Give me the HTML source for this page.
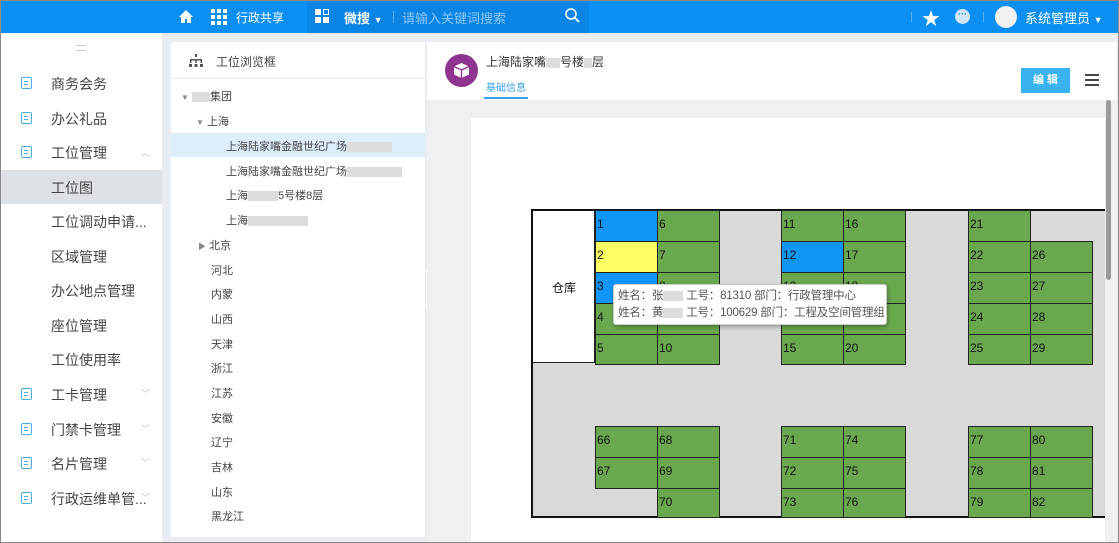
<!DOCTYPE html>
<html><head><meta charset="utf-8"><style>
*{margin:0;padding:0;box-sizing:border-box}
body{width:1119px;height:543px;overflow:hidden;font-family:"Liberation Sans","Noto Sans CJK SC",sans-serif;background:#e9edf2;position:relative;color:#333}
.a{position:absolute}
.top{left:0;top:0;width:1119px;height:33px;background:#0b8ff3;color:#fff;font-size:12px}
.side{left:1px;top:33px;width:161px;height:509px;background:#fff}
.si{position:absolute;left:50px;font-size:14px;color:#444}
.ic{position:absolute;left:20px;width:11px;height:12px;border:1.5px solid #4aaee8;border-radius:2px;background:linear-gradient(#4aaee8,#4aaee8) 2px 3px/4px 1px no-repeat,linear-gradient(#4aaee8,#4aaee8) 2px 6px/4px 1px no-repeat}
.chev{position:absolute;left:140px;font-size:9px;color:#bbb}
.tree{left:171px;top:42px;width:254px;height:495px;background:#fff}
.ti{position:absolute;font-size:11px;color:#444}
.blur{display:inline-block;background:#ddd;height:10px;vertical-align:middle}
.cell{position:absolute;width:63px;height:32px;border:1px solid #222;background:#6aa84f;font-size:12px;color:#111;padding:6px 0 0 1px;font-family:"Liberation Sans",sans-serif}
</style></head><body>
<div class="a" style="left:0;top:0;width:1119px;height:543px;border:1px solid #888;z-index:50;pointer-events:none"></div>
<div class="a top">
 <svg class="a" style="left:178px;top:9px" width="16" height="15" viewBox="0 0 16 15"><path d="M8 1L1 8h2v6h4v-4h2v4h4V8h2z" fill="#fff"/></svg>
 <svg class="a" style="left:211px;top:9px" width="16" height="16"><g fill="#fff"><rect x="0" y="0" width="4" height="4"/><rect x="6" y="0" width="4" height="4"/><rect x="12" y="0" width="4" height="4"/><rect x="0" y="6" width="4" height="4"/><rect x="6" y="6" width="4" height="4"/><rect x="12" y="6" width="4" height="4"/><rect x="0" y="12" width="4" height="4"/><rect x="6" y="12" width="4" height="4"/><rect x="12" y="12" width="4" height="4"/></g></svg>
 <div class="a" style="left:236px;top:9px;font-size:12px">行政共享</div>
 <div class="a" style="left:307px;top:0;width:282px;height:33px;background:#0a85e6"></div>
 <svg class="a" style="left:315px;top:9px" width="14" height="14"><g fill="#fff"><rect x="0" y="0" width="6" height="6"/><rect x="0" y="8" width="6" height="6"/><rect x="8" y="8" width="6" height="6"/><rect x="8.5" y="0.5" width="5" height="5" fill="none" stroke="#fff"/></g></svg>
 <div class="a" style="left:344px;top:8px;font-size:13px;font-weight:bold">微搜 <span style="font-size:9px">▼</span></div>
 <div class="a" style="left:393px;top:11px;width:1px;height:12px;background:#5aaef0"></div>
 <div class="a" style="left:402px;top:8px;font-size:13px;color:#8cc6f5">请输入关键词搜索</div>
 <svg class="a" style="left:565px;top:8px" width="15" height="15"><circle cx="6" cy="6" r="5" fill="none" stroke="#fff" stroke-width="1.6"/><path d="M10 10l4 4" stroke="#fff" stroke-width="1.8"/></svg>
 <div class="a" style="left:911px;top:12px;width:1px;height:10px;background:#5aaef0"></div>
 <div class="a" style="left:922px;top:5px;font-size:18px">★</div>
 <div class="a" style="left:955px;top:9px;width:15px;height:15px;border-radius:50%;background:#cfe6fb;color:#0b8ff3;font-size:9px;line-height:11px;text-align:center;font-weight:bold">···</div>
 <div class="a" style="left:983px;top:12px;width:1px;height:10px;background:#5aaef0"></div>
 <div class="a" style="left:995px;top:6px;width:22px;height:22px;border-radius:50%;background:#f1f1f1"></div>
 <div class="a" style="left:1025px;top:8px;font-size:13px">系统管理员 <span style="font-size:9px">▼</span></div>
</div>
<div class="a side">
 <div class="a" style="left:75px;top:12px;width:10px;height:6px;border-top:1px solid #ccc;border-bottom:1px solid #ccc"></div>
 <div class="a" style="left:0;top:137px;width:161px;height:34px;background:#dde1e6"></div>
 <div class="ic" style="top:44px"></div><div class="si" style="top:41px">商务会务</div>
 <div class="ic" style="top:79px"></div><div class="si" style="top:76px">办公礼品</div>
 <div class="ic" style="top:113px"></div><div class="si" style="top:110px">工位管理</div><div class="chev" style="top:113px">︿</div>
 <div class="si" style="top:145px">工位图</div>
 <div class="si" style="top:179px">工位调动申请...</div>
 <div class="si" style="top:214px">区域管理</div>
 <div class="si" style="top:248px">办公地点管理</div>
 <div class="si" style="top:283px">座位管理</div>
 <div class="si" style="top:317px">工位使用率</div>
 <div class="ic" style="top:355px"></div><div class="si" style="top:352px">工卡管理</div><div class="chev" style="top:354px">﹀</div>
 <div class="ic" style="top:390px"></div><div class="si" style="top:387px">门禁卡管理</div><div class="chev" style="top:389px">﹀</div>
 <div class="ic" style="top:424px"></div><div class="si" style="top:421px">名片管理</div><div class="chev" style="top:423px">﹀</div>
 <div class="ic" style="top:459px"></div><div class="si" style="top:456px">行政运维单管...</div><div class="chev" style="top:458px">﹀</div>
</div>
<div class="a tree">
 <div class="a" style="left:0;top:36px;width:254px;height:1px;background:#e8e8e8"></div>
 <svg class="a" style="left:18px;top:12px" width="14" height="14"><g fill="#555"><rect x="6" y="0" width="2" height="3"/><rect x="1" y="5" width="12" height="1.5"/><rect x="1" y="5" width="1.5" height="4"/><rect x="6.2" y="5" width="1.5" height="4"/><rect x="11.5" y="5" width="1.5" height="4"/><rect x="0" y="10" width="3" height="3"/><rect x="5.5" y="10" width="3" height="3"/><rect x="11" y="10" width="3" height="3"/></g></svg>
 <div class="a" style="left:45px;top:11px;font-size:12px;color:#444">工位浏览框</div>
 <div class="a" style="left:0;top:91px;width:254px;height:24px;background:#ddeefc"></div>
 <div class="ti" style="left:10px;top:46px"><span style="font-size:8px;color:#888">▼</span> <span class="blur" style="width:18px"></span>集团</div>
 <div class="ti" style="left:25px;top:71px"><span style="font-size:8px;color:#888">▼</span> 上海</div>
 <div class="ti" style="left:55px;top:96px">上海陆家嘴金融世纪广场<span class="blur" style="width:45px"></span></div>
 <div class="ti" style="left:55px;top:121px">上海陆家嘴金融世纪广场<span class="blur" style="width:55px"></span></div>
 <div class="ti" style="left:55px;top:145px">上海<span class="blur" style="width:30px"></span>5号楼8层</div>
 <div class="ti" style="left:55px;top:170px">上海<span class="blur" style="width:60px"></span></div>
 <div class="ti" style="left:27px;top:195px"><span style="font-size:8px;color:#888">▶</span> 北京</div>
 <div class="ti" style="left:40px;top:220px">河北</div>
 <div class="ti" style="left:40px;top:244px">内蒙</div>
 <div class="ti" style="left:40px;top:269px">山西</div>
 <div class="ti" style="left:40px;top:294px">天津</div>
 <div class="ti" style="left:40px;top:318px">浙江</div>
 <div class="ti" style="left:40px;top:343px">江苏</div>
 <div class="ti" style="left:40px;top:368px">安徽</div>
 <div class="ti" style="left:40px;top:392px">辽宁</div>
 <div class="ti" style="left:40px;top:417px">吉林</div>
 <div class="ti" style="left:40px;top:442px">山东</div>
 <div class="ti" style="left:40px;top:466px">黑龙江</div>
</div>
<div class="a" style="left:426px;top:270px;width:10px;height:38px;background:#fff;border-radius:0 6px 6px 0;font-size:7px;color:#888;line-height:38px;text-align:center">◀</div>
<div class="a" style="left:427px;top:42px;width:690px;height:58px;background:#fff">
 <div class="a" style="left:18px;top:12px;width:33px;height:33px;border-radius:50%;background:#8f3591"></div>
 <svg class="a" style="left:26px;top:20px" width="17" height="17" viewBox="0 0 17 17"><path d="M8.5 1L16 4.5v8L8.5 16 1 12.5v-8z" fill="#fff"/><path d="M1 4.5l7.5 3.5L16 4.5M8.5 8v8" stroke="#8f3591" stroke-width="1.4" fill="none"/></svg>
 <div class="a" style="left:59px;top:11px;font-size:12px;color:#333">上海陆家嘴<span class="blur" style="width:14px"></span>号楼<span class="blur" style="width:8px"></span>层</div>
 <div class="a" style="left:59px;top:37px;font-size:10px;color:#3aa0e8">基础信息</div>
 <div class="a" style="left:57px;top:55px;width:44px;height:2px;background:#3aa0e8"></div>
 <div class="a" style="left:594px;top:26px;width:49px;height:25px;background:#39b3ef;color:#fff;font-size:11px;text-align:center;line-height:25px;font-weight:bold">编 辑</div>
 <div class="a" style="left:658px;top:32px;width:14px;height:12px;border-top:2px solid #444;border-bottom:2px solid #444"><div style="margin-top:3px;height:2px;background:#444"></div></div>
</div>
<div class="a" style="left:427px;top:100px;width:690px;height:442px;background:#eef0f2"></div>
<div class="a" style="left:471px;top:118px;width:634px;height:425px;background:#fff;overflow:hidden">
 <div class="a" style="left:60px;top:91px;width:590px;height:309px;background:#d9d9d9;border:2px solid #111"></div>
 <div class="a" style="left:62px;top:93px;width:62px;height:152px;background:#fff;border-right:1px solid #222;border-bottom:1px solid #222"></div>
 <div class="a" style="left:81px;top:161px;font-size:12px;color:#111">仓库</div>
</div>
<div class="a" id="cells" style="left:0;top:0">
<div class="cell" style="left:595px;top:210px;background:#0f95f5">1</div>
<div class="cell" style="left:595px;top:241px;background:#ffff66">2</div>
<div class="cell" style="left:595px;top:272px;background:#0f95f5">3</div>
<div class="cell" style="left:595px;top:303px">4</div>
<div class="cell" style="left:595px;top:334px;height:31px">5</div>
<div class="cell" style="left:657px;top:210px">6</div>
<div class="cell" style="left:657px;top:241px">7</div>
<div class="cell" style="left:657px;top:272px">8</div>
<div class="cell" style="left:657px;top:303px">9</div>
<div class="cell" style="left:657px;top:334px;height:31px">10</div>
<div class="cell" style="left:781px;top:210px">11</div>
<div class="cell" style="left:781px;top:241px;background:#0f95f5">12</div>
<div class="cell" style="left:781px;top:272px">13</div>
<div class="cell" style="left:781px;top:303px">14</div>
<div class="cell" style="left:781px;top:334px;height:31px">15</div>
<div class="cell" style="left:843px;top:210px">16</div>
<div class="cell" style="left:843px;top:241px">17</div>
<div class="cell" style="left:843px;top:272px">18</div>
<div class="cell" style="left:843px;top:303px">19</div>
<div class="cell" style="left:843px;top:334px;height:31px">20</div>
<div class="cell" style="left:968px;top:210px">21</div>
<div class="cell" style="left:968px;top:241px">22</div>
<div class="cell" style="left:968px;top:272px">23</div>
<div class="cell" style="left:968px;top:303px">24</div>
<div class="cell" style="left:968px;top:334px;height:31px">25</div>
<div class="cell" style="left:1030px;top:241px">26</div>
<div class="cell" style="left:1030px;top:272px">27</div>
<div class="cell" style="left:1030px;top:303px">28</div>
<div class="cell" style="left:1030px;top:334px;height:31px">29</div>
<div class="cell" style="left:595px;top:426px">66</div>
<div class="cell" style="left:595px;top:457px">67</div>
<div class="cell" style="left:657px;top:426px">68</div>
<div class="cell" style="left:657px;top:457px">69</div>
<div class="cell" style="left:657px;top:488px;height:30px">70</div>
<div class="cell" style="left:781px;top:426px">71</div>
<div class="cell" style="left:781px;top:457px">72</div>
<div class="cell" style="left:781px;top:488px;height:30px">73</div>
<div class="cell" style="left:843px;top:426px">74</div>
<div class="cell" style="left:843px;top:457px">75</div>
<div class="cell" style="left:843px;top:488px;height:30px">76</div>
<div class="cell" style="left:968px;top:426px">77</div>
<div class="cell" style="left:968px;top:457px">78</div>
<div class="cell" style="left:968px;top:488px;height:30px">79</div>
<div class="cell" style="left:1030px;top:426px">80</div>
<div class="cell" style="left:1030px;top:457px">81</div>
<div class="cell" style="left:1030px;top:488px;height:30px">82</div>
</div>
<div class="a" style="left:613px;top:284px;width:274px;height:41px;background:#fff;border:1px solid #ccc;border-radius:3px;box-shadow:1px 2px 4px rgba(0,0,0,.3);font-size:11.5px;color:#555;padding:3px 0 0 4px;line-height:17px;white-space:nowrap;overflow:hidden;letter-spacing:-0.2px">
 姓名：张<span class="blur" style="width:20px"></span> 工号：81310 部门：行政管理中心<br>
 姓名：黄<span class="blur" style="width:20px"></span> 工号：100629 部门：工程及空间管理组
</div>
<div class="a" style="left:1105px;top:100px;width:8px;height:443px;background:#f0f0f0"></div>
<div class="a" style="left:1106px;top:100px;width:5px;height:180px;background:#9a9a9a;border-radius:3px"></div>
</body></html>
